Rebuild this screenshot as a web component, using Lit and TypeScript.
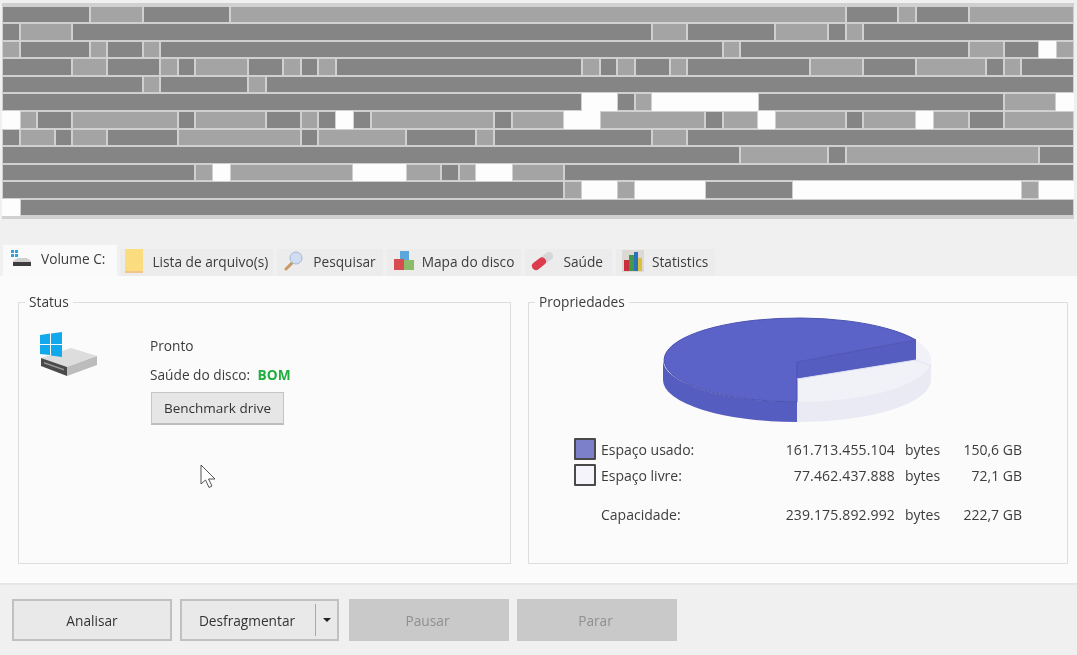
import { LitElement, html, css, svg } from "lit";
import { customElement } from "lit/decorators.js";

const ROWS = [
  "d5 l3 d5 l35 d3 l1 d3 l6",
  "d1 l3 d33 l2 d5 l3 d1 l1 d12",
  "l1 d4 l1 d2 l1 d32 l1 d13 l2 d2 w1 l1",
  "d4 l2 d3 l1 d1 l3 d2 l1 d1 l1 d14 l1 d1 l1 d2 l1 d7 l3 d3 l4 d1 l1 d3",
  "d8 l1 d5 l1 d46",
  "d33 w2 d1 l1 w6 d14 l3 w1",
  "w1 l1 d2 l6 d1 l4 d2 l1 d1 w1 d1 l7 d1 l3 w2 l6 d1 l2 w1 l4 d1 l3 w1 l2 d2 l4",
  "d1 l2 d1 l2 d4 l7 d1 l5 d4 l1 d9 l2 d22",
  "d42 l5 d1 l11 d2",
  "d11 l1 w1 l7 w3 l2 d1 l1 w2 l3 d29",
  "d32 l1 w2 l1 w4 d5 w13 l1 w2",
  "w1 d60",
].map((r) => r.split(" ").map((s) => ({ t: s[0], n: +s.slice(1) })));

const driveIcon = svg`<svg class="drive" viewBox="0 0 60 46" width="60" height="46">
  <path d="M2 26 L32 16 L58 24 L28 35 Z" fill="#dddddd"/>
  <path d="M28 35 L58 24 L58 33 L28 44 Z" fill="#bcbcbc"/>
  <path d="M2 26 L28 35 L28 44 L2 34 Z" fill="#4a4a4a"/>
  <path d="M5 30 L25 37 L25 38.500 L5 31.500 Z" fill="#9a9a9a"/>
  <path d="M1 3 L11 1.500 L11 12 L1 12 Z M12 1.400 L23 0 L23 12 L12 12 Z M1 13 L11 13 L11 23 L1 22 Z M12 13 L23 13 L23 25 L12 23.500 Z" fill="#12a8ec"/>
</svg>`;

@customElement("app-root")
export class AppRoot extends LitElement {
  static styles = css`
    :host {
      display: flex;
      flex-direction: column;
      position: relative;
      width: 1077px;
      height: 655px;
      overflow: hidden;
      background: #f0f0f0;
      color: #3c3c3c;
      font-family: "Open Sans", "Noto Sans", sans-serif;
      font-size: 13.7px;
      filter: blur(0.5px);
    }
    .map {
      display: grid;
      grid-template-columns: repeat(61, 1fr);
      grid-auto-rows: 1fr;
      gap: 2px;
      box-sizing: border-box;
      height: 216px;
      margin: 3px 3px 0 2px;
      padding: 3.5px 1px;
      background: #d0d0d0;
    }
    .c { min-width: 0; }
    .d { background: #858585; }
    .l { background: #a4a4a4; }
    .w { background: #fdfdfd; box-shadow: 0 0 0 1px #fdfdfd; }

    .tabs {
      display: flex;
      align-items: flex-end;
      height: 31px;
      margin-top: 26px;
      padding-left: 3px;
      gap: 4px;
    }
    .tab {
      display: flex;
      align-items: center;
      gap: 9px;
      box-sizing: border-box;
      height: 27px;
      padding: 0 5px 3px 5px;
      background: #ececec;
      white-space: nowrap;
    }
    .tab.active {
      height: 31px;
      background: #fafafa;
      padding: 0 12px 4px 7px;
      margin-right: -1px;
    }
    .tab.search { padding: 0 7px 3px 7px; }
    .tab.diskmap { padding: 0 7px 3px 6px; gap: 7px; }
    .tab.health { padding: 0 9px 3px 6px; gap: 10px; }
    .tab.stats { padding: 0 7px 3px 6px; gap: 8px; }
    .tab svg { flex: none; }

    .page {
      flex: 1;
      display: flex;
      gap: 17px;
      box-sizing: border-box;
      padding: 18px 9px 19px 18px;
      background: #fbfbfb;
      border-bottom: 2px solid #e6e6e6;
    }
    fieldset {
      margin: 0;
      padding: 0;
      min-width: 0;
      border: 1px solid #dedede;
      box-sizing: border-box;
    }
    legend {
      padding: 0 4px;
      margin-left: 6px;
      line-height: 16px;
    }
    .status { width: 493px; }
    .status-body { display: flex; padding: 12px 0 0 20px; }
    .drive { flex: none; margin-top: 10px; }
    .info {
      display: flex;
      flex-direction: column;
      align-items: flex-start;
      margin: 15px 0 0 51px;
    }
    .info .line { line-height: 18px; margin-bottom: 11px; }
    .info .line + .line { margin-bottom: 0; }
    .bom { color: #1fae3c; font-weight: 700; margin-left: 4px; }
    .bench {
      box-sizing: border-box;
      width: 133px;
      height: 33px;
      margin: 8px 0 0 1px;
      background: #e6e6e6;
      border: 1px solid #c4c4c4;
      border-bottom: 2px solid #bdbdbd;
      font: inherit;
      font-size: 13.5px;
      color: #333;
      padding: 0;
    }
    .props { flex: 1; }
    .pie { display: block; margin: 5px 0 0 132px; }
    .legend {
      display: grid;
      grid-template-columns: 21px 160px 140px 50px 77px;
      grid-template-rows: 26px 26px 13px 26px;
      align-items: center;
      margin: 11px 0 0 45px;
      font-size: 14px;
    }
    .legend .label { padding-left: 6px; }
    .legend .num { text-align: right; letter-spacing: 0.15px; }
    .legend .unit { padding-left: 10px; }
    .legend .gb { text-align: right; }
    .sw {
      box-sizing: border-box;
      width: 22px;
      height: 22px;
      border: 2px solid #4a4a4a;
      border-radius: 1px;
    }
    .sw.used { background: #7c7fca; }
    .sw.free { background: #f4f4fa; }
    .spacer { grid-column: 1 / -1; }

    .bar {
      display: flex;
      gap: 8px;
      height: 70px;
      box-sizing: border-box;
      padding: 14px 0 0 12px;
    }
    .btn {
      box-sizing: border-box;
      width: 160px;
      height: 42px;
      background: #e9e9e9;
      border: 2px solid #c0c0c0;
      font: inherit;
      color: #333;
      padding: 0;
    }
    .btn[disabled] {
      background: #c9c9c9;
      border-color: #c9c9c9;
      color: #8f8f8f;
      padding-right: 3px;
    }
    .split {
      box-sizing: border-box;
      width: 159px;
      height: 42px;
      margin-right: 2px;
      display: flex;
      align-items: center;
      background: #e9e9e9;
      border: 2px solid #c0c0c0;
      color: #333;
    }
    .split .txt { width: 133px; padding-right: 3px; box-sizing: border-box; text-align: center; }
    .split .arrow {
      flex: 1;
      height: 32px;
      display: flex;
      align-items: center;
      justify-content: center;
      border-left: 1px solid #a8a8a8;
    }
    .tri {
      border-left: 4px solid transparent;
      border-right: 4px solid transparent;
      border-top: 4px solid #222;
    }
    .cursor { position: absolute; left: 200px; top: 464px; }
  `;

  render() {
    return html`
      <div class="map">
        ${ROWS.map((r) =>
          r.map((s) => html`<div class="c ${s.t}" style="grid-column: span ${s.n}"></div>`)
        )}
      </div>

      <div class="tabs">
        <div class="tab active">
          <svg width="22" height="20" viewBox="0 0 22 20">
            <path d="M1 1h3v3H1zM5 1h3v3H5zM1 5h3v3H1zM5 5h3v3H5z" fill="#26a8e6"/>
            <path d="M3 12 L8 9 H17 L21 12 V16 H3 Z" fill="#d0d0d0"/>
            <path d="M3 13 H21 V17 H3 Z" fill="#3d3d3d"/>
          </svg>
          <span>Volume C:</span>
        </div>
        <div class="tab">
          <svg width="18" height="24" viewBox="0 0 18 24"><rect width="18" height="24" rx="1" fill="#fbdc7e"/><rect y="22" width="18" height="2" fill="#f0c68a"/></svg>
          <span>Lista de arquivo(s)</span>
        </div>
        <div class="tab search">
          <svg width="20" height="20" viewBox="0 0 20 20">
            <path d="M2 18 L8 12" stroke="#c99a63" stroke-width="3" stroke-linecap="round"/>
            <circle cx="12" cy="7" r="6" fill="#cfdcf2" stroke="#a7b8d6"/>
          </svg>
          <span>Pesquisar</span>
        </div>
        <div class="tab diskmap">
          <svg width="22" height="22" viewBox="0 0 22 22">
            <rect x="7" y="1" width="9" height="10" fill="#5ba7dc"/>
            <rect x="1" y="9" width="10" height="11" fill="#d84b50"/>
            <rect x="11" y="10" width="10" height="10" fill="#8cbc6a"/>
          </svg>
          <span>Mapa do disco</span>
        </div>
        <div class="tab health">
          <svg width="22" height="20" viewBox="0 0 22 20">
            <path d="M5 15 L18 5" stroke="#d6d6da" stroke-width="8" stroke-linecap="round"/>
            <path d="M5 15 L11 10.400" stroke="#dc3c4c" stroke-width="8" stroke-linecap="round"/>
          </svg>
          <span>Saúde</span>
        </div>
        <div class="tab stats">
          <svg width="22" height="22" viewBox="0 0 22 22">
            <rect width="22" height="22" fill="#dcd8d4"/>
            <rect x="2" y="10" width="5" height="11" fill="#c9303c"/>
            <rect x="7" y="5" width="5" height="16" fill="#3f9b4a"/>
            <rect x="12" y="2" width="4" height="19" fill="#2f6fc0"/>
            <rect x="16" y="8" width="4" height="13" fill="#d9c23a"/>
          </svg>
          <span>Statistics</span>
        </div>
      </div>

      <div class="page">
        <fieldset class="status">
          <legend>Status</legend>
          <div class="status-body">
            ${driveIcon}
            <div class="info">
              <div class="line">Pronto</div>
              <div class="line">Saúde do disco: <span class="bom">BOM</span></div>
              <button class="bench">Benchmark drive</button>
            </div>
          </div>
        </fieldset>
        <fieldset class="props">
          <legend>Propriedades</legend>
          <svg class="pie" width="272" height="110" viewBox="662 315 272 110">
            <ellipse cx="798" cy="380" rx="134" ry="42" fill="#e9eaf4"/>
            <rect x="664" y="360" width="268" height="20" fill="#e9eaf4"/>
            <ellipse cx="798" cy="360" rx="134" ry="42" fill="#f1f1f8"/>
            <path d="M664 360 A134 42 0 0 0 798 402 V422 A134 42 0 0 1 664 380 Z" fill="#565dc0"/>
            <path d="M798 362 L917 340 V360 L798 379 Z" fill="#565dc0"/>
            <path d="M798 362 L917 340 A134 42 0 1 0 798 402 Z" fill="#5c63c8" stroke="#4c53b0" stroke-width="1"/>
            <path d="M798 379 L917 360 L932 366" fill="none" stroke="#dfe3f0"/>
          </svg>
          <div class="legend">
            <div class="sw used"></div><div class="label">Espaço usado:</div>
            <div class="num">161.713.455.104</div><div class="unit">bytes</div><div class="gb">150,6 GB</div>
            <div class="sw free"></div><div class="label">Espaço livre:</div>
            <div class="num">77.462.437.888</div><div class="unit">bytes</div><div class="gb">72,1 GB</div>
            <div class="spacer"></div>
            <div></div><div class="label">Capacidade:</div>
            <div class="num">239.175.892.992</div><div class="unit">bytes</div><div class="gb">222,7 GB</div>
          </div>
        </fieldset>
      </div>

      <div class="bar">
        <button class="btn">Analisar</button>
        <div class="split">
          <span class="txt">Desfragmentar</span>
          <span class="arrow"><span class="tri"></span></span>
        </div>
        <button class="btn" disabled>Pausar</button>
        <button class="btn" disabled>Parar</button>
      </div>

      <svg class="cursor" width="18" height="25" viewBox="0 0 18 25">
        <path d="M1 1 V20 L5.500 16 L9 23.500 L12 22 L8.500 15 H15 Z" fill="#fff" stroke="#555" stroke-width="1"/>
      </svg>
    `;
  }
}
